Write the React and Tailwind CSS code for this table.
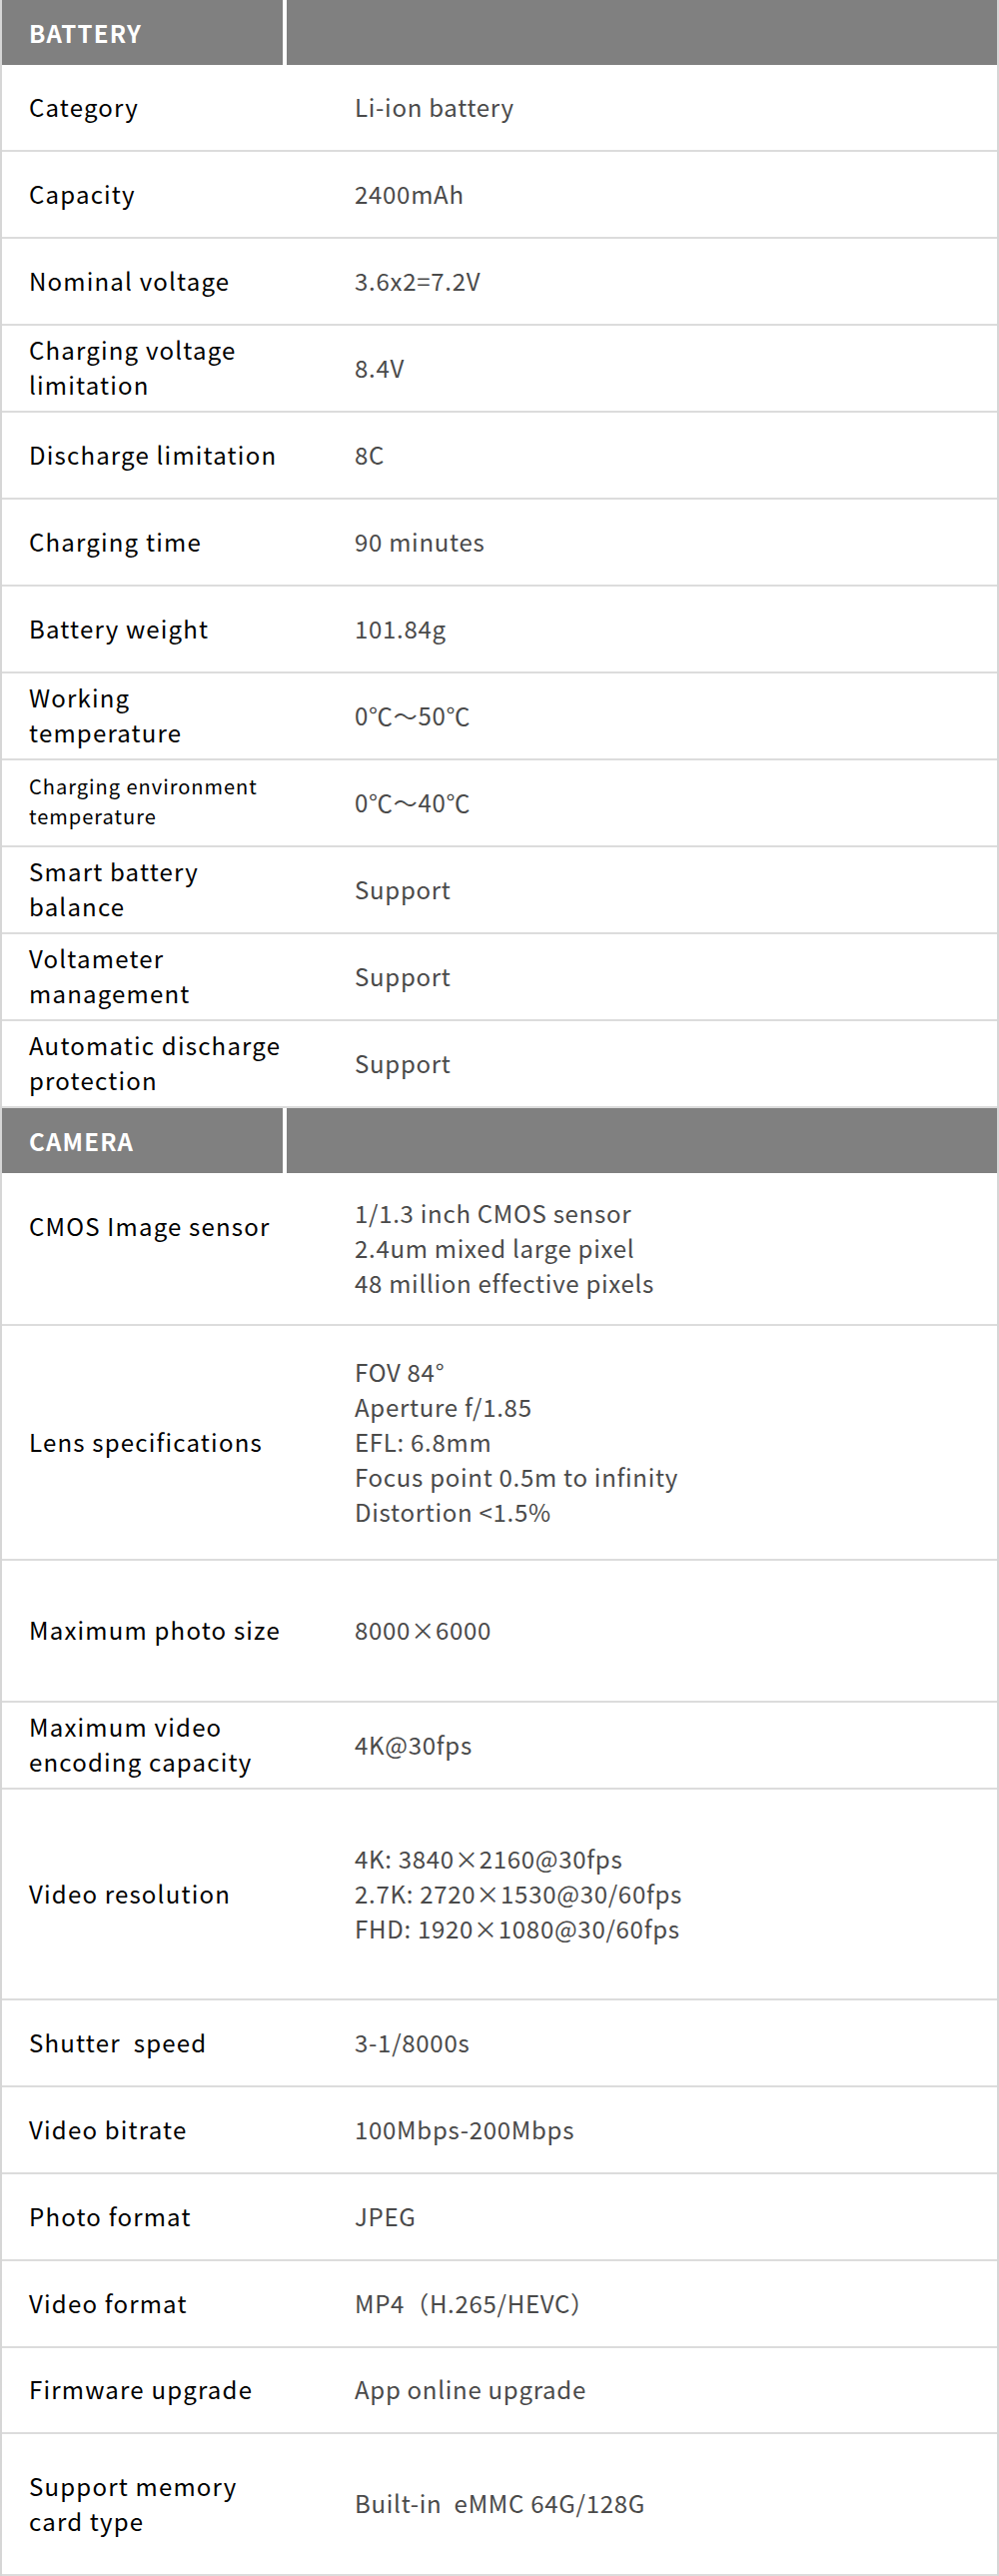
const battery = [
  { label: ['Category'], value: ['Li-ion battery'], h: 'h-[87px]' },
  { label: ['Capacity'], value: ['2400mAh'], h: 'h-[87px]' },
  { label: ['Nominal voltage'], value: ['3.6x2=7.2V'], h: 'h-[87px]' },
  { label: ['Charging voltage', 'limitation'], value: ['8.4V'], h: 'h-[87px]' },
  { label: ['Discharge limitation'], value: ['8C'], h: 'h-[87px]' },
  { label: ['Charging time'], value: ['90 minutes'], h: 'h-[87px]' },
  { label: ['Battery weight'], value: ['101.84g'], h: 'h-[87px]' },
  { label: ['Working', 'temperature'], value: ['0℃～50℃'], h: 'h-[87px]' },
  { label: ['Charging environment', 'temperature'], value: ['0℃～40℃'], h: 'h-[87px]', small: true },
  { label: ['Smart battery', 'balance'], value: ['Support'], h: 'h-[87px]' },
  { label: ['Voltameter', 'management'], value: ['Support'], h: 'h-[87px]' },
  { label: ['Automatic discharge', 'protection'], value: ['Support'], h: 'h-[87px]' },
];

const camera = [
  {
    label: ['CMOS Image sensor'],
    value: ['1/1.3 inch CMOS sensor', '2.4um mixed large pixel', '48 million effective pixels'],
    h: 'h-[153px]',
    lift: true,
  },
  {
    label: ['Lens specifications'],
    value: ['FOV 84°', 'Aperture f/1.85', 'EFL: 6.8mm', 'Focus point 0.5m to infinity', 'Distortion <1.5%'],
    h: 'h-[235px]',
  },
  { label: ['Maximum photo size'], value: ['8000×6000'], h: 'h-[142px]' },
  { label: ['Maximum video', 'encoding capacity'], value: ['4K@30fps'], h: 'h-[87px]' },
  {
    label: ['Video resolution'],
    value: ['4K: 3840×2160@30fps', '2.7K: 2720×1530@30/60fps', 'FHD: 1920×1080@30/60fps'],
    h: 'h-[211px]',
  },
  { label: ['Shutter  speed'], value: ['3-1/8000s'], h: 'h-[87px]' },
  { label: ['Video bitrate'], value: ['100Mbps-200Mbps'], h: 'h-[87px]' },
  { label: ['Photo format'], value: ['JPEG'], h: 'h-[87px]' },
  { label: ['Video format'], value: ['MP4（H.265/HEVC）'], h: 'h-[87px]' },
  { label: ['Firmware upgrade'], value: ['App online upgrade'], h: 'h-[86px]' },
  { label: ['Support memory', 'card type'], value: ['Built-in  eMMC 64G/128G'], h: 'h-[142px]' },
];

const SectionHeader = ({ title }) => (
  <div className="flex h-[65px]">
    <div className="w-[281px] bg-[#808080] flex items-center pl-[27px] text-white text-[24px] font-semibold tracking-[0.05em]">
      {title}
    </div>
    <div className="w-[4px] bg-white" />
    <div className="flex-1 bg-[#808080]" />
  </div>
);

const Row = ({ row }) => (
  <div className={`flex ${row.h} border-b-2 border-[#dcdcdc] pb-[3px]`}>
    <div className={`w-[353px] pl-[27px] flex flex-col justify-center text-black ${row.lift ? 'pb-[44px]' : ''}`}>
      {row.label.map((l, i) => (
        <span
          key={i}
          className={
            row.small
              ? 'whitespace-pre text-[20px] leading-[30px] tracking-[0.05em]'
              : 'whitespace-pre text-[24px] leading-[35px] tracking-[0.05em]'
          }
        >
          {l}
        </span>
      ))}
    </div>
    <div className="flex-1 flex flex-col justify-center text-[#4a4a4a]">
      {row.value.map((v, i) => (
        <span key={i} className="whitespace-pre text-[24px] leading-[35px] tracking-[0.03em]">
          {v}
        </span>
      ))}
    </div>
  </div>
);

export default function App() {
  return (
    <div
      className="w-[1000px] bg-white border-x-2 border-[#d6d6d6]"
      style={{ fontFamily: '"Noto Sans CJK SC", "Noto Sans", sans-serif' }}
    >
      <SectionHeader title="BATTERY" />
      {battery.map((r, i) => (
        <Row key={i} row={r} />
      ))}
      <SectionHeader title="CAMERA" />
      {camera.map((r, i) => (
        <Row key={i} row={r} />
      ))}
    </div>
  );
}
